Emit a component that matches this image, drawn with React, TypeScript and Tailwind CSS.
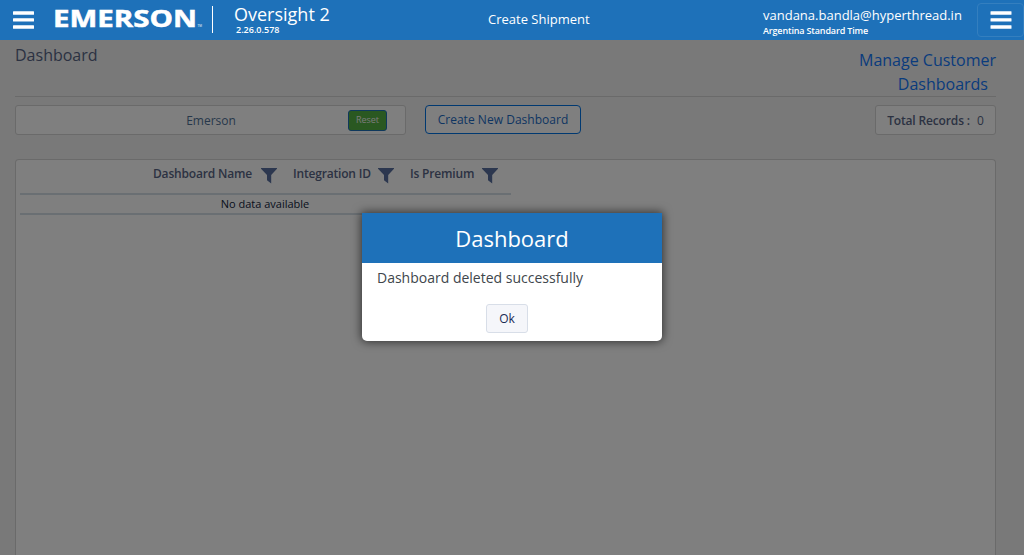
import React from "react";

function Bars({ className }: { className: string }) {
  return (
    <svg viewBox="0 0 21 18" className={className} fill="#fff" aria-hidden="true">
      <rect x="0" y="0.3" width="21" height="3.4" rx="0.5" />
      <rect x="0" y="7.2" width="21" height="3.4" rx="0.5" />
      <rect x="0" y="14.2" width="21" height="3.6" rx="0.5" />
    </svg>
  );
}

function Funnel() {
  return (
    <svg viewBox="0 0 16 16" className="h-4 w-4 shrink-0" fill="#586f9e" aria-hidden="true">
      <path d="M0 0H16V0.8L10.2 7V15.6L6 12.2V7L0 0.8Z" />
    </svg>
  );
}

function Heading({ text, className }: { text: string; className: string }) {
  return (
    <div className={"flex items-center " + className}>
      <span className="flex-1 whitespace-nowrap">{text}</span>
      <div className="mt-[3px]">
        <Funnel />
      </div>
    </div>
  );
}

function Header() {
  return (
    <header className="flex h-10 bg-[#1e71b9] text-white">
      <button className="ml-[13px] mt-[11px] h-[18px] w-[21px]" aria-label="Menu">
        <Bars className="h-[18px] w-[21px]" />
      </button>
      <svg viewBox="0 0 148 36" className="ml-5 h-9 w-[148px] overflow-visible" fill="#fff">
        <text x="-1" y="27.4" fontFamily="Open Sans, sans-serif" fontWeight="700" fontSize="23" stroke="#fff" strokeWidth="0.5" textLength="144" lengthAdjust="spacingAndGlyphs">EMERSON</text>
        <text x="143.5" y="27.4" fontFamily="Open Sans, sans-serif" fontSize="3">TM</text>
      </svg>
      <div className="ml-[10px] mt-1.5 h-[27px] w-px bg-white" />
      <div className="ml-[21px] w-[110px]">
        <div className="mt-1 whitespace-nowrap text-[18px] leading-5">Oversight 2</div>
        <div className="ml-[2px] text-[9px] font-semibold leading-3">2.26.0.578</div>
      </div>
      <div className="ml-[144px] w-[110px] whitespace-nowrap pt-[9px] text-[13px] leading-5">Create Shipment</div>
      <div className="ml-[165px] w-[214px] whitespace-nowrap">
        <div className="mt-[6px] text-[13px] leading-[19px]">vandana.bandla@hyperthread.in</div>
        <div className="text-[9px] font-semibold leading-3 tracking-[-0.15px]">Argentina Standard Time</div>
      </div>
      <button className="mt-[3px] flex h-[34px] w-[47px] items-center justify-center rounded border border-[#347fbf]" aria-label="User menu">
        <Bars className="h-[18px] w-[22px]" />
      </button>
    </header>
  );
}

function Content() {
  return (
    <main className="flex h-[515px] flex-col bg-[#f2f2f2] pl-[15px] pr-7 text-[#586585]">
      <div className="flex h-[57px] shrink-0 justify-between border-b border-[#d4d4d4]">
        <h1 className="pt-1 text-[16px] leading-[22px]">Dashboard</h1>
        <a className="flex flex-col pt-2 text-right text-[16px] leading-6 text-[#1478fa]">
          <span>Manage Customer</span>
          <span className="pr-2">Dashboards</span>
        </a>
      </div>
      <div className="mt-2 flex h-[30px] shrink-0">
        <div className="flex w-[391px] items-center rounded-[3px] border border-[#d4d4d4] bg-white pr-[18px] text-[#4f7196]">
          <span className="flex-1 pl-[58px] pt-0.5 text-center text-[12px]">Emerson</span>
          <button className="h-[21px] w-[39px] rounded-[3px] border border-[#1e71b9] bg-[#55b042] text-[9px] text-[#f4f4f4]">Reset</button>
        </div>
        <button className="ml-[19px] h-[29px] w-[156px] rounded border border-[#0072e3] bg-white text-[12px] tracking-[0.03px] text-[#1c6bc4]">Create New Dashboard</button>
        <div className="ml-auto flex w-[121px] items-center justify-center rounded-[3px] border border-[#d4d4d4] bg-white pt-0.5 text-[12px]">
          <b className="font-semibold tracking-[-0.15px]">Total Records :</b>
          <span className="ml-[7px]">0</span>
        </div>
      </div>
      <section className="mt-6 flex-1 rounded-t border border-b-0 border-[#d4d4d4] bg-white pl-1">
        <div className="w-[491px]">
          <div className="flex h-[35px] items-start border-b-2 border-[#d5dfe7] pl-[133px] pt-1 text-[12px] font-semibold leading-5 tracking-[-0.18px]">
            <Heading text="Dashboard Name" className="w-[124px]" />
            <Heading text="Integration ID" className="ml-4 w-[101px]" />
            <Heading text="Is Premium" className="ml-4 w-[88px]" />
          </div>
          <div className="h-5 border-b-2 border-[#d5dfe7] pr-px text-center text-[11px] leading-[18px] text-[#111d3c]">No data available</div>
        </div>
      </section>
    </main>
  );
}

function Dialog() {
  return (
    <div className="absolute inset-x-0 bottom-0 top-10 flex justify-center bg-black/50 pt-[173px]">
      <div role="dialog" className="flex h-[128px] w-[300px] flex-col rounded-b-[5px] bg-white shadow-[0_0_10px_1px_rgba(0,0,0,0.6)]">
        <h2 className="h-[50px] bg-[#1e71b9] text-center text-[22px] leading-[51px] text-white">Dashboard</h2>
        <p className="mt-[5px] pl-[15px] text-[14px] leading-5 text-[#40464c]">Dashboard deleted successfully</p>
        <button className="ml-[124px] mt-4 h-[29px] w-[42px] rounded-[3px] border border-[#d8dee8] bg-[#f5f6fa] text-[12px] text-[#172b55]">Ok</button>
      </div>
    </div>
  );
}

export default function App() {
  return (
    <div className="relative h-[555px] w-[1024px] overflow-hidden font-['Open_Sans',sans-serif]">
      <Header />
      <Content />
      <Dialog />
    </div>
  );
}
